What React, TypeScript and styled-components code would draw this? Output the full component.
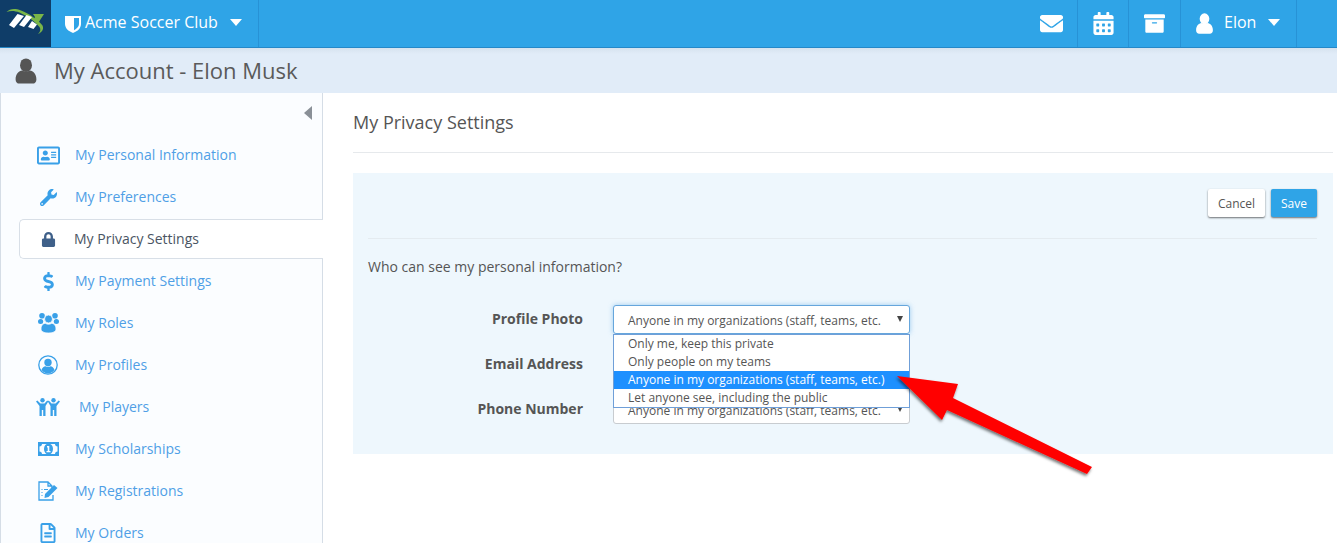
import styled, { createGlobalStyle } from "styled-components";
import { ReactNode } from "react";
import {
  FaArchive,
  FaCalendarAlt,
  FaDollarSign,
  FaEnvelope,
  FaLock,
  FaRegAddressCard,
  FaRegFileAlt,
  FaWrench,
} from "react-icons/fa";

const GlobalStyle = createGlobalStyle`
  html, body {
    margin: 0;
    padding: 0;
    background: #fff;
    font-family: "Open Sans", "Liberation Sans", sans-serif;
    overflow: hidden;
  }
  * { box-sizing: border-box; }
`;

const PersonIcon = ({ size }: { size: number }) => (
  <svg width={size} height={size} viewBox="0 0 20 20" fill="currentColor">
    <ellipse cx="10" cy="5.500" rx="4.600" ry="5.200" />
    <path d="M2 16.500c0-4.500 2.600-6.400 5-6.900 1.600 1 4.400 1 6 0 2.400.5 5 2.400 5 6.900 0 2-1.200 3.200-3 3.200H5c-1.800 0-3-1.200-3-3.200z" />
  </svg>
);

const ShieldIcon = () => (
  <svg width="16" height="18" viewBox="0 0 16 18">
    <path fill="#fff" d="M0 1h16v8c0 4.500-4 7.500-8 9-4-1.500-8-4.500-8-9z" />
    <path fill="#2fa4e7" d="M9 3h5v6c0 2.800-2.400 4.800-5 6.200z" />
  </svg>
);

const LogoIcon = () => (
  <svg width="51" height="47" viewBox="0 0 51 47">
    <path fill="#7ab648" d="M6.500 12C10 8.500 15 8.300 21 10.500c8 3 16 8.500 21.500 15 1.500 3 0 6.500-4.500 8.500 2.500-2.500 3-4.500 1.500-7-5-6-12-11-20-14.500C14.500 10.500 10.500 10.500 6.500 12z" />
    <path fill="#7ab648" d="M33 14h11l-6.500 10-4-4 1.500-3z" />
    <path fill="#fff" d="M9 25 17.500 14l6.500 2-10 12zM19 25l7.500-10 5.500 2-8 10zM28 27l4-6 5 3.500-3.500 4.500z" />
  </svg>
);

const GroupIcon = () => (
  <svg width="21" height="20" viewBox="0 0 21 20" fill="currentColor">
    <circle cx="4" cy="2.800" r="2.800" />
    <circle cx="17" cy="2.800" r="2.800" />
    <ellipse cx="2.600" cy="8.500" rx="2.600" ry="2.500" />
    <ellipse cx="18.400" cy="8.500" rx="2.600" ry="2.500" />
    <circle cx="10.500" cy="6" r="4" stroke="#fbfdff" strokeWidth="0.800" />
    <path d="M3 16c0-4 2.500-5.500 4.300-5.700 1.800 1.200 4.600 1.200 6.400 0C15.500 10.500 18 12 18 16c0 2.600-3 4-7.500 4S3 18.600 3 16z" stroke="#fbfdff" strokeWidth="0.800" />
  </svg>
);

const ProfileIcon = () => (
  <svg width="20" height="20" viewBox="0 0 20 20">
    <circle cx="10" cy="10" r="9.200" fill="none" stroke="currentColor" strokeWidth="1.300" />
    <circle cx="10" cy="7.500" r="3.700" fill="currentColor" />
    <path fill="currentColor" d="M3.500 15c.6-2.600 2.600-3.600 4-3.800 1.500.8 3.500.8 5 0 1.400.2 3.400 1.200 4 3.800-1.600 2.200-4 3.500-6.500 3.500S5.100 17.200 3.500 15z" />
  </svg>
);

const PlayersIcon = () => (
  <svg width="24" height="18" viewBox="0 0 24 18" fill="currentColor">
    <circle cx="6.500" cy="2.300" r="2.200" />
    <circle cx="17.500" cy="2.300" r="2.200" />
    <path d="M0 3.500 1.300 2.500 4.500 5.500h4l2.700-3 1.100 1L9.500 8v10H7.200v-6h-1.400v6H3.500V8z" />
    <path d="M11.800 3.500 12.800 2.500 15.500 5.500h4l3.200-3 1.300 1L20.500 8v10h-2.300v-6h-1.400v6h-2.300V8z" />
  </svg>
);

const BillIcon = () => (
  <svg width="21" height="14" viewBox="0 0 21 14">
    <rect width="21" height="14" fill="currentColor" />
    <path fill="#fbfdff" d="M1.500 4.500C3 4.500 4 3.500 4 2h13c0 1.500 1 2.500 2.500 2.500v5C18 9.500 17 10.500 17 12H4c0-1.500-1-2.500-2.500-2.500z" />
    <ellipse cx="10.500" cy="7" rx="4.500" ry="5.500" fill="currentColor" />
    <path fill="#fbfdff" d="M9 4h2.300v5H12.500v1.200h-4V9h1.200V5.400H9z" />
  </svg>
);

const RegistrationIcon = () => (
  <svg width="20" height="20" viewBox="0 0 20 20" fill="none" stroke="currentColor">
    <path strokeWidth="1.300" d="M15 14v5H1V1h9l4 4v2M10 1v4h4" />
    <path strokeWidth="1.200" d="M3.500 8.500h1M3.500 11.500h1M3.500 14.500h1M6 8.500h4" />
    <path fill="currentColor" stroke="none" d="M7 13l9-9 3.500 3-9 9-4 1z" />
  </svg>
);

type NavEntry = { label: string; icon: ReactNode; active?: boolean; wide?: boolean };

const navEntries: NavEntry[] = [
  { label: "My Personal Information", icon: <FaRegAddressCard size={23} /> },
  { label: "My Preferences", icon: <FaWrench size={17} /> },
  { label: "My Privacy Settings", icon: <FaLock size={15} />, active: true },
  { label: "My Payment Settings", icon: <FaDollarSign size={19} /> },
  { label: "My Roles", icon: <GroupIcon /> },
  { label: "My Profiles", icon: <ProfileIcon /> },
  { label: "My Players", icon: <PlayersIcon />, wide: true },
  { label: "My Scholarships", icon: <BillIcon /> },
  { label: "My Registrations", icon: <RegistrationIcon /> },
  { label: "My Orders", icon: <FaRegFileAlt size={20} /> },
];

const options = [
  "Only me, keep this private",
  "Only people on my teams",
  "Anyone in my organizations (staff, teams, etc.)",
  "Let anyone see, including the public",
];

const selected = "Anyone in my organizations (staff, teams, etc.";

const App = () => {
  return (
    <Page>
      <GlobalStyle />
      <TopBar>
        <Logo>
          <LogoIcon />
        </Logo>
        <ClubMenu>
          <ShieldIcon />
          <ClubName>Acme Soccer Club</ClubName>
          <Caret />
        </ClubMenu>
        <TopSpacer />
        <TopButton $width={52}>
          <FaEnvelope size={23} />
        </TopButton>
        <TopButton $width={51}>
          <FaCalendarAlt size={23} />
        </TopButton>
        <TopButton $width={52}>
          <FaArchive size={21} />
        </TopButton>
        <TopButton $width={116} $padded>
          <PersonIcon size={21} />
          <UserName>Elon</UserName>
          <Caret />
        </TopButton>
        <TopEnd />
      </TopBar>

      <TitleBar>
        <PersonIcon size={26} />
        <PageTitle>My Account - Elon Musk</PageTitle>
      </TitleBar>

      <Body>
        <Sidebar>
          <CollapseRow>
            <CollapseArrow />
          </CollapseRow>
          {navEntries.map((entry) => (
            <NavItem key={entry.label} $active={entry.active}>
              <NavIcon>{entry.icon}</NavIcon>
              <NavLabel $active={entry.active} $wide={entry.wide}>
                {entry.label}
              </NavLabel>
            </NavItem>
          ))}
        </Sidebar>

        <Main>
          <SectionTitle>My Privacy Settings</SectionTitle>
          <Panel>
            <Actions>
              <CancelButton>Cancel</CancelButton>
              <SaveButton>Save</SaveButton>
            </Actions>
            <Question>Who can see my personal information?</Question>
            <FormRow>
              <FieldLabel>Profile Photo</FieldLabel>
              <Select $focused>
                <SelectValue>{selected}</SelectValue>
                <SelectArrow />
                <OptionList>
                  {options.map((option, index) => (
                    <Option key={option} $highlighted={index === 2}>
                      {option}
                    </Option>
                  ))}
                </OptionList>
              </Select>
            </FormRow>
            <FormRow>
              <FieldLabel>Email Address</FieldLabel>
              <Select>
                <SelectValue>{selected}</SelectValue>
                <SelectArrow />
              </Select>
            </FormRow>
            <FormRow>
              <FieldLabel>Phone Number</FieldLabel>
              <Select>
                <SelectValue>{selected}</SelectValue>
                <SelectArrow />
              </Select>
            </FormRow>
          </Panel>
        </Main>
      </Body>

      <Callout viewBox="0 0 1337 543" aria-hidden="true">
        <defs>
          <filter id="arrowShadow" x="-10%" y="-10%" width="120%" height="120%">
            <feDropShadow dx="-1" dy="2" stdDeviation="1.500" floodColor="#000" floodOpacity="0.55" />
          </filter>
        </defs>
        <polygon
          fill="#ff0000"
          filter="url(#arrowShadow)"
          points="897,376 958,384 953,398 1092,467 1087,474 947,410 942,420"
        />
      </Callout>
    </Page>
  );
};

const Page = styled.div`
  position: relative;
  width: 1337px;
  height: 543px;
  overflow: hidden;
  display: flex;
  flex-direction: column;
  background: #fff;
`;

const TopBar = styled.header`
  display: flex;
  flex: 0 0 48px;
  height: 48px;
  background: #2fa4e7;
  border-bottom: 1px solid #2588c8;
  color: #fff;
`;

const Logo = styled.div`
  width: 51px;
  display: flex;
  background: #0f3d68;
`;

const ClubMenu = styled.div`
  width: 208px;
  display: flex;
  align-items: center;
  padding-left: 14px;
  border-right: 1px solid #2792d6;
`;

const ClubName = styled.span`
  font-size: 16px;
  margin: 0 12px 4px 4px;
`;

const Caret = styled.span`
  width: 0;
  height: 0;
  margin-bottom: 2px;
  border-style: solid;
  border-width: 7px 6.500px 0;
  border-color: #fff transparent transparent;
`;

const TopSpacer = styled.div`
  flex: 1;
`;

const TopButton = styled.div<{ $width: number; $padded?: boolean }>`
  width: ${(p) => p.$width}px;
  display: flex;
  align-items: center;
  justify-content: ${(p) => (p.$padded ? "flex-start" : "center")};
  padding-left: ${(p) => (p.$padded ? "13px" : "0")};
  border-right: 1px solid #2792d6;
`;

const TopEnd = styled.div`
  width: 40px;
`;

const UserName = styled.span`
  font-size: 16px;
  margin: 0 12px 4px 9px;
`;

const TitleBar = styled.div`
  flex: 0 0 45px;
  display: flex;
  align-items: center;
  gap: 15px;
  padding-left: 13px;
  color: #555;
  background: linear-gradient(#d6e3ef 0, #e1ecf8 6px);
`;

const PageTitle = styled.h1`
  margin: 0 0 2px;
  font-size: 22px;
  font-weight: 400;
  color: #5a5a5a;
`;

const Body = styled.div`
  flex: 1;
  display: flex;
  min-height: 0;
`;

const Sidebar = styled.nav`
  flex: 0 0 323px;
  background: #fbfdff;
  border-left: 1px solid #d5dde6;
  border-right: 1px solid #d5dde6;
`;

const CollapseRow = styled.div`
  height: 41px;
  display: flex;
  justify-content: flex-end;
  padding: 13px 10px 0 0;
`;

const CollapseArrow = styled.div`
  width: 0;
  height: 0;
  border-style: solid;
  border-width: 7px 8px 7px 0;
  border-color: transparent #8a9097 transparent transparent;
`;

const NavItem = styled.div<{ $active?: boolean }>`
  display: flex;
  align-items: center;
  height: ${(p) => (p.$active ? "40px" : "42px")};
  margin: ${(p) => (p.$active ? "1px -1px 1px 18px" : "0")};
  padding-left: ${(p) => (p.$active ? "9px" : "28px")};
  color: ${(p) => (p.$active ? "#3f6089" : "#39a0e8")};
  background: ${(p) => (p.$active ? "#fff" : "transparent")};
  border: ${(p) => (p.$active ? "1px solid #d8dfe7" : "0 solid transparent")};
  border-right: 0;
  border-radius: ${(p) => (p.$active ? "5px 0 0 5px" : "0")};
`;

const NavIcon = styled.div`
  width: 38px;
  display: flex;
  justify-content: center;
  flex: none;
`;

const NavLabel = styled.span<{ $active?: boolean; $wide?: boolean }>`
  font-size: 14px;
  margin-left: ${(p) => (p.$active ? "7px" : p.$wide ? "12px" : "8px")};
  margin-bottom: 2px;
  color: ${(p) => (p.$active ? "#4a5563" : "#4f9fe6")};
`;

const Main = styled.main`
  flex: 1;
  padding: 0 4px 0 30px;
`;

const SectionTitle = styled.h2`
  margin: 0 0 20px;
  height: 60px;
  line-height: 59px;
  font-size: 18px;
  font-weight: 400;
  color: #555;
  border-bottom: 1px solid #e6e9ec;
`;

const Panel = styled.section`
  height: 281px;
  padding: 16px 16px 0 15px;
  background: #eef7fd;
`;

const Actions = styled.div`
  display: flex;
  justify-content: flex-end;
  gap: 6px;
  height: 50px;
  border-bottom: 1px solid #e4ebf0;
`;

const CancelButton = styled.div`
  width: 57px;
  height: 28px;
  display: flex;
  align-items: center;
  justify-content: center;
  font-size: 12px;
  color: #555;
  background: #fff;
  border-radius: 2px;
  box-shadow: 0 1px 2px rgba(0, 0, 0, 0.55);
`;

const SaveButton = styled(CancelButton)`
  width: 46px;
  color: #fff;
  background: #2fa4e7;
`;

const Question = styled.p`
  margin: 0 0 20px;
  padding-top: 18px;
  height: 46px;
  font-size: 14px;
  line-height: 19px;
  color: #555;
`;

const FormRow = styled.div`
  display: flex;
  align-items: center;
  height: 29px;
  margin-bottom: 16px;
`;

const FieldLabel = styled.label`
  width: 215px;
  margin: 0 30px 2px 0;
  text-align: right;
  font-size: 14px;
  font-weight: 700;
  color: #555;
`;

const Select = styled.div<{ $focused?: boolean }>`
  position: relative;
  width: 297px;
  height: 29px;
  display: flex;
  align-items: center;
  padding: 1px 0 0 14px;
  background: #fff;
  border: 1px solid ${(p) => (p.$focused ? "#66a6dc" : "#c8ccd0")};
  border-radius: 3px;
  box-shadow: ${(p) => (p.$focused ? "0 0 5px rgba(102, 175, 233, 0.6)" : "none")};
`;

const SelectValue = styled.span`
  font-size: 12px;
  color: #555;
  white-space: nowrap;
`;

const SelectArrow = styled.span`
  position: absolute;
  right: 6px;
  top: 10px;
  width: 0;
  height: 0;
  border-style: solid;
  border-width: 6px 3.500px 0;
  border-color: #444 transparent transparent;
`;

const OptionList = styled.ul`
  position: absolute;
  z-index: 2;
  top: 28px;
  left: -1px;
  width: 297px;
  margin: 0;
  padding: 0;
  list-style: none;
  background: #fff;
  border: 1px solid #6f9fd8;
`;

const Option = styled.li<{ $highlighted?: boolean }>`
  height: 18px;
  line-height: 18px;
  padding-left: 14px;
  font-size: 12px;
  white-space: nowrap;
  color: ${(p) => (p.$highlighted ? "#fff" : "#555")};
  background: ${(p) => (p.$highlighted ? "#1e90ff" : "transparent")};
`;

const Callout = styled.svg`
  position: absolute;
  z-index: 3;
  top: 0;
  left: 0;
  width: 1337px;
  height: 543px;
  pointer-events: none;
`;

export default App;
